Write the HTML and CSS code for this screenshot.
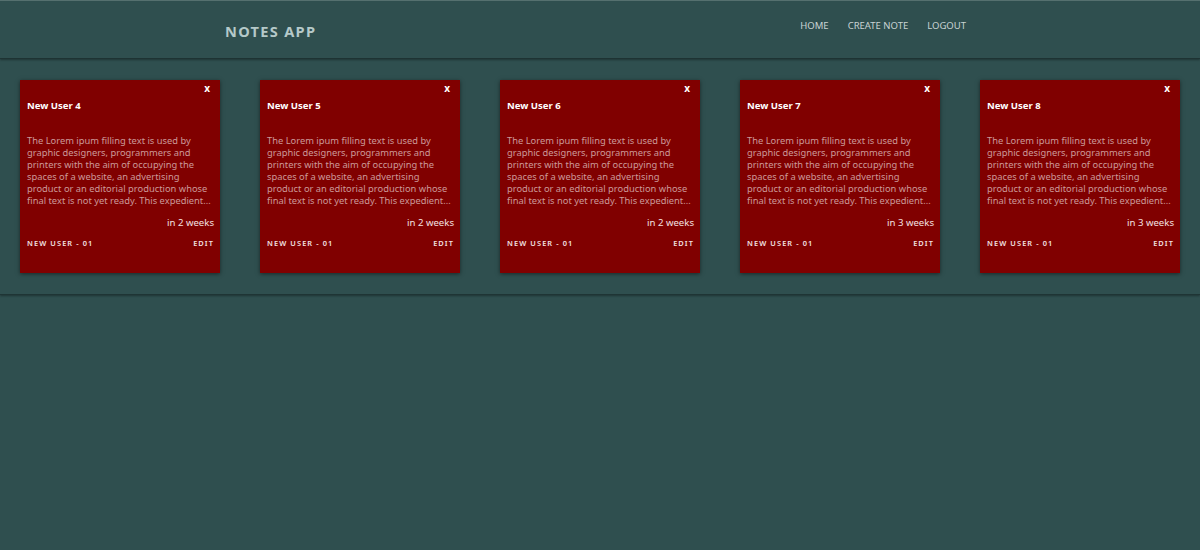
FILE: index.html
```html
<!DOCTYPE html>
<html>
<head>
<meta charset="utf-8">
<link rel="stylesheet" href="styles.css">
</head>
<body>
<header class="topbar">
  <div class="brand">NOTES APP</div>
  <nav class="nav">
    <a>HOME</a>
    <a>CREATE NOTE</a>
    <a>LOGOUT</a>
  </nav>
</header>
<section class="notes">
  <div class="card">
    <div class="close">x</div>
    <div class="title">New User 4</div>
    <p class="text">The Lorem ipum filling text is used by graphic designers, programmers and printers with the aim of occupying the spaces of a website, an advertising product or an editorial production whose final text is not yet ready. This expedient...</p>
    <div class="time">in 2 weeks</div>
    <div class="foot"><span>NEW USER - 01</span><span>EDIT</span></div>
  </div>
  <div class="card">
    <div class="close">x</div>
    <div class="title">New User 5</div>
    <p class="text">The Lorem ipum filling text is used by graphic designers, programmers and printers with the aim of occupying the spaces of a website, an advertising product or an editorial production whose final text is not yet ready. This expedient...</p>
    <div class="time">in 2 weeks</div>
    <div class="foot"><span>NEW USER - 01</span><span>EDIT</span></div>
  </div>
  <div class="card">
    <div class="close">x</div>
    <div class="title">New User 6</div>
    <p class="text">The Lorem ipum filling text is used by graphic designers, programmers and printers with the aim of occupying the spaces of a website, an advertising product or an editorial production whose final text is not yet ready. This expedient...</p>
    <div class="time">in 2 weeks</div>
    <div class="foot"><span>NEW USER - 01</span><span>EDIT</span></div>
  </div>
  <div class="card">
    <div class="close">x</div>
    <div class="title">New User 7</div>
    <p class="text">The Lorem ipum filling text is used by graphic designers, programmers and printers with the aim of occupying the spaces of a website, an advertising product or an editorial production whose final text is not yet ready. This expedient...</p>
    <div class="time">in 3 weeks</div>
    <div class="foot"><span>NEW USER - 01</span><span>EDIT</span></div>
  </div>
  <div class="card">
    <div class="close">x</div>
    <div class="title">New User 8</div>
    <p class="text">The Lorem ipum filling text is used by graphic designers, programmers and printers with the aim of occupying the spaces of a website, an advertising product or an editorial production whose final text is not yet ready. This expedient...</p>
    <div class="time">in 3 weeks</div>
    <div class="foot"><span>NEW USER - 01</span><span>EDIT</span></div>
  </div>
</section>
</body>
</html>
```
FILE: styles.css
```css
html, body {
  margin: 0;
  padding: 0;
}
body {
  background: #2f4f4f;
  font-family: "Noto Sans", "Open Sans", sans-serif;
  height: 550px;
  overflow: hidden;
  border-top: 1px solid #55706f;
  box-sizing: border-box;
}
.topbar {
  height: 57px;
  display: flex;
  align-items: flex-start;
  padding-left: 225px;
  padding-right: 234px;
  border-bottom: 1px solid #1f3535;
  box-shadow: 0 1px 2px rgba(0,0,0,0.35);
}
.brand {
  margin-top: 20px;
  font-size: 14.6px;
  font-weight: 700;
  letter-spacing: 1.3px;
  color: #b5c9c9;
}
.nav {
  margin-left: auto;
  margin-top: 18px;
  display: flex;
  gap: 19px;
}
.nav a {
  font-size: 9.5px;
  color: #c9d3d3;
}
.notes {
  display: flex;
  gap: 40px;
  padding: 21px 20px 21px 20px;
  border-bottom: 1px solid #1f3535;
  box-shadow: 0 1px 2px rgba(0,0,0,0.35);
}
.card {
  width: 200px;
  height: 193px;
  box-sizing: border-box;
  background: #800000;
  box-shadow: 0 1px 4px rgba(0,0,0,0.5);
  padding: 2px 6px 0 7px;
  display: flex;
  flex-direction: column;
}
.close {
  align-self: flex-end;
  font-size: 10px;
  font-weight: 700;
  color: #ffffff;
  line-height: 12px;
  margin-right: 4px;
}
.title {
  margin-top: 6px;
  font-size: 9.5px;
  font-weight: 700;
  color: #ffffff;
  line-height: 12px;
}
.text {
  margin: 23px 0 0 0;
  font-size: 9.35px;
  line-height: 12px;
  color: #cc9a9a;
}
.time {
  margin-top: 10px;
  text-align: right;
  font-size: 9.6px;
  line-height: 12px;
  color: #f3e2e2;
}
.foot {
  margin-top: 8px;
  display: flex;
  justify-content: space-between;
  font-size: 7.4px;
  font-weight: 600;
  letter-spacing: 1.1px;
  color: #f3e2e2;
  line-height: 12px;
}
```
